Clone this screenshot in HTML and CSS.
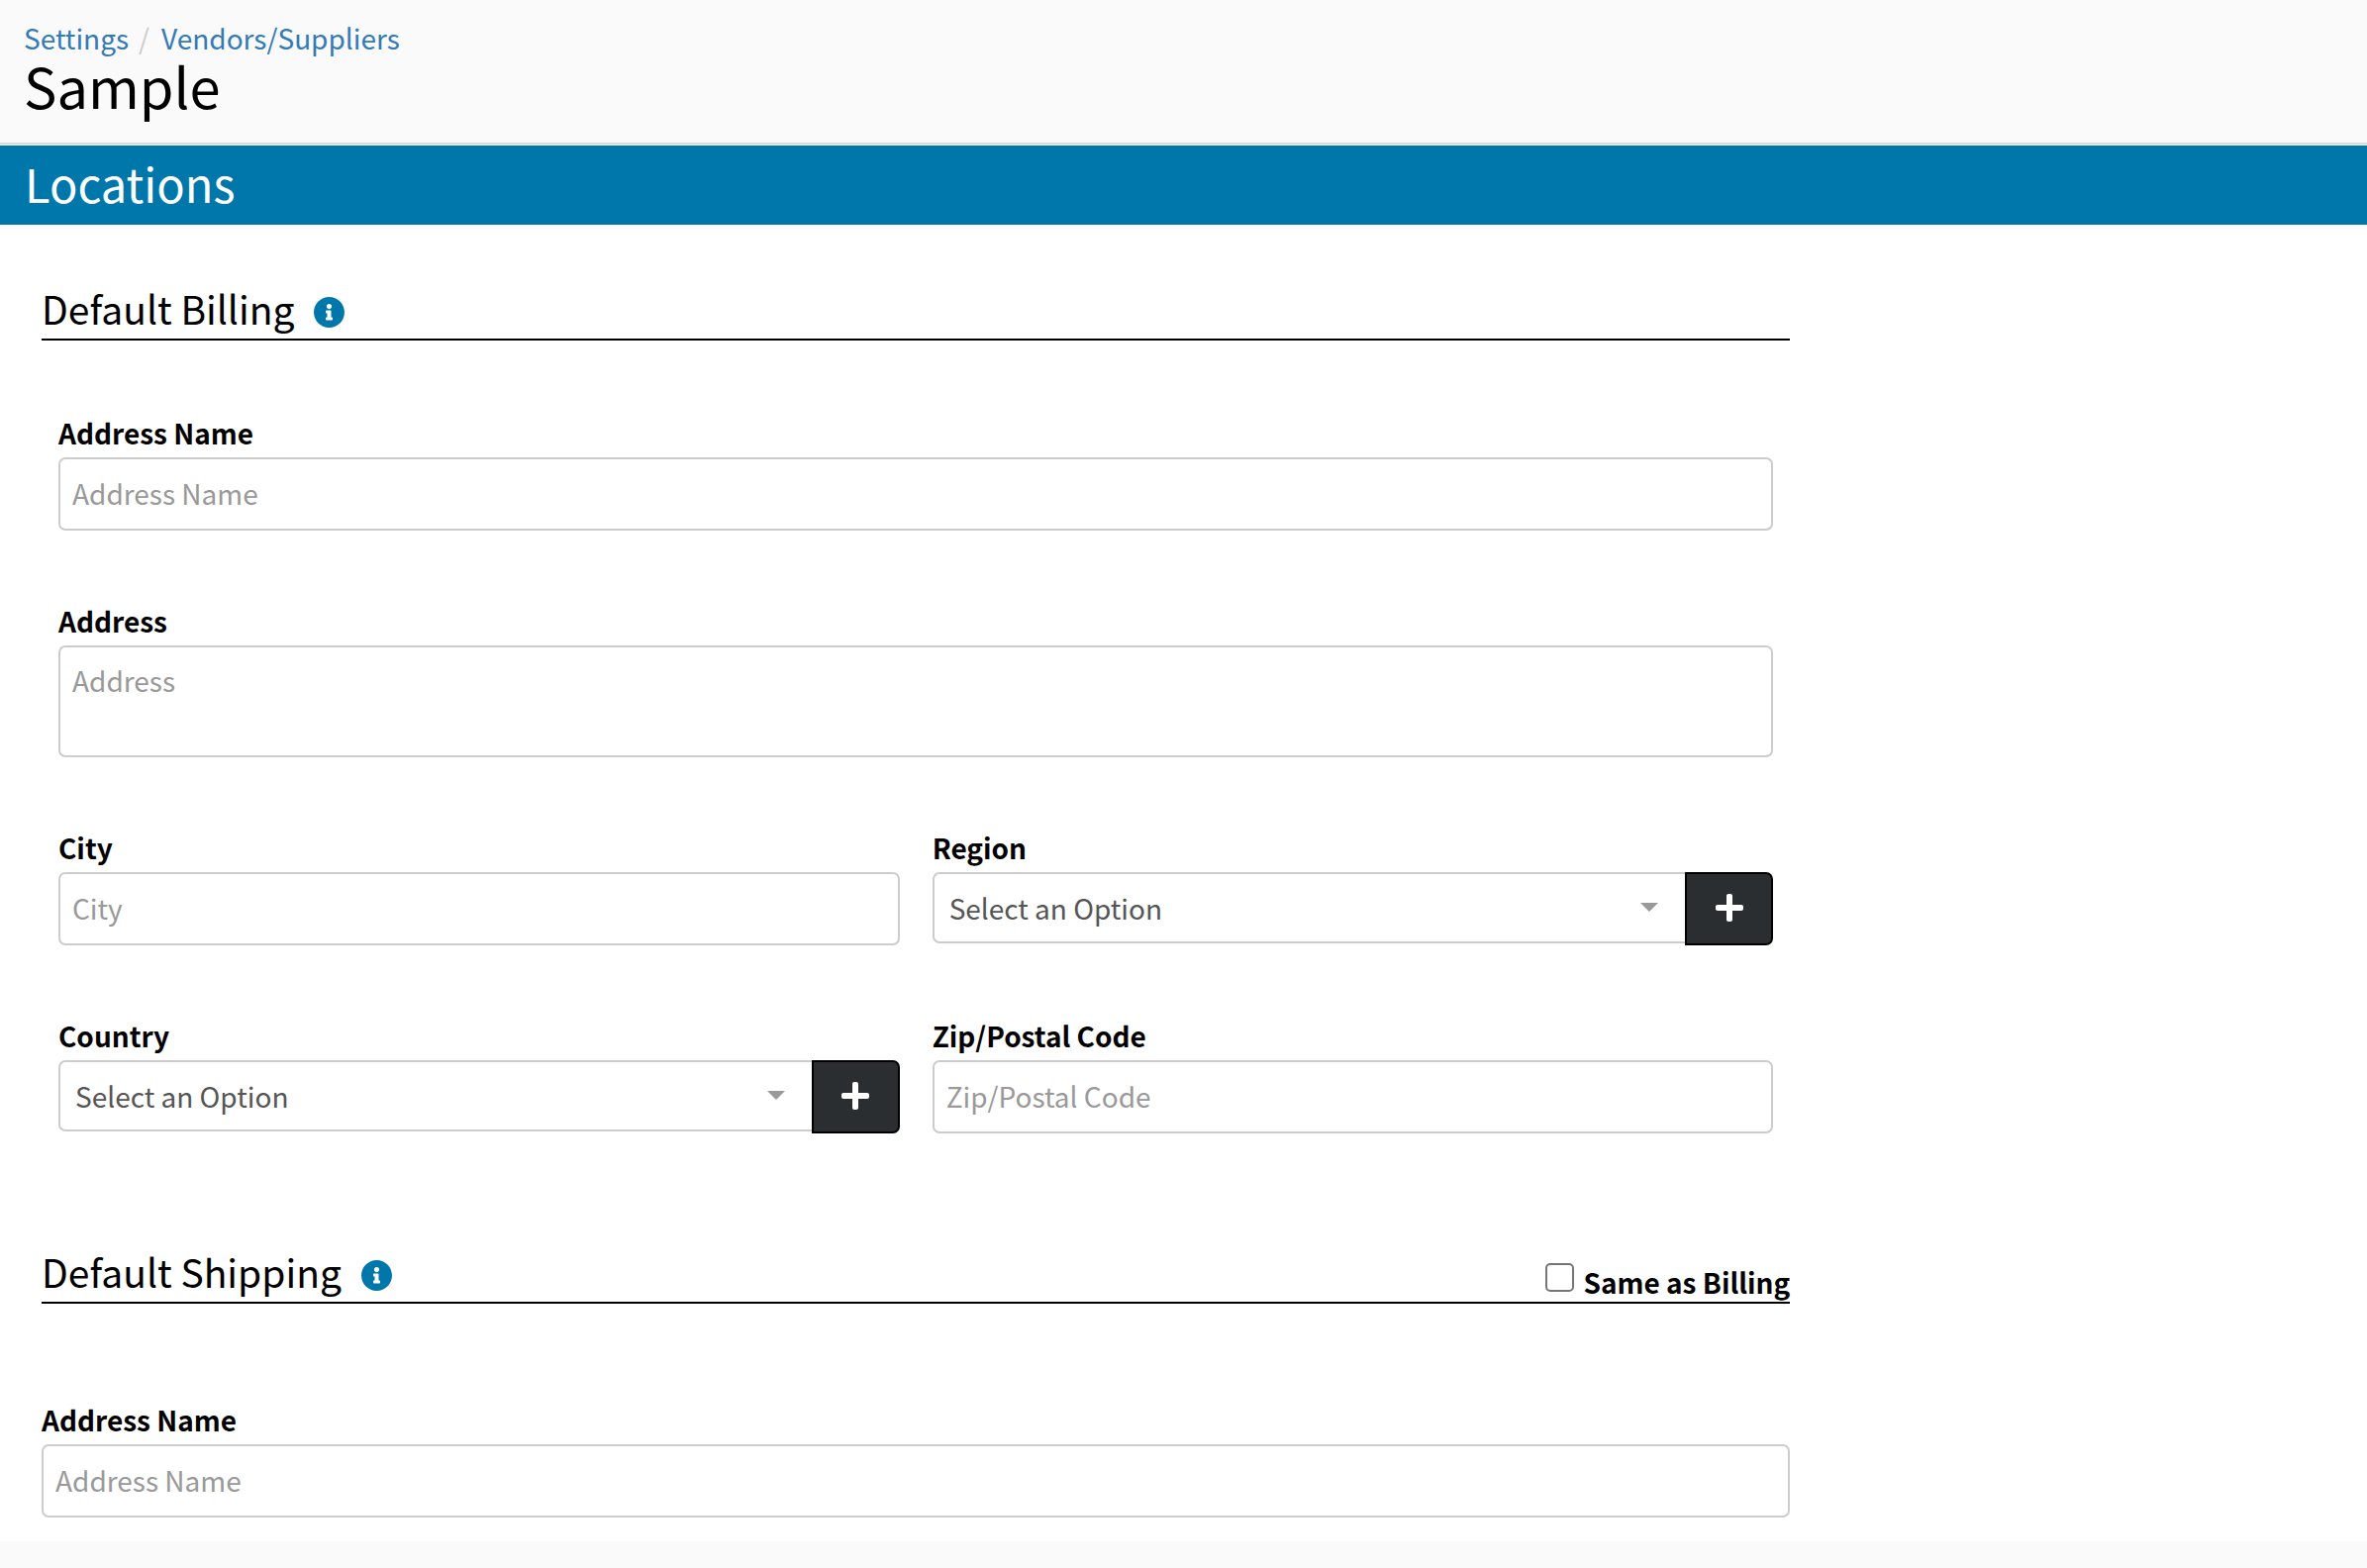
FILE: index.html
```html
<!DOCTYPE html>
<html lang="en">
<head>
<meta charset="utf-8">
<meta name="viewport" content="width=device-width, initial-scale=1">
<title>Sample - Vendors/Suppliers</title>
<link rel="stylesheet" href="styles.css">
</head>
<body>
<svg class="sprite" aria-hidden="true">
  <symbol id="icon-info" viewBox="8 8 496 496"><path d="M256 8C119.043 8 8 119.083 8 256c0 136.997 111.043 248 248 248s248-111.003 248-248C504 119.083 392.957 8 256 8zm0 110c23.196 0 42 18.804 42 42s-18.804 42-42 42-42-18.804-42-42 18.804-42 42-42zm56 254c0 6.627-5.373 12-12 12h-88c-6.627 0-12-5.373-12-12v-24c0-6.627 5.373-12 12-12h12v-64h-12c-6.627 0-12-5.373-12-12v-24c0-6.627 5.373-12 12-12h64c6.627 0 12 5.373 12 12v100h12c6.627 0 12 5.373 12 12v24z"/></symbol>
  <symbol id="icon-plus" viewBox="0 0 448 512"><path d="M416 208H272V64c0-17.670-14.330-32-32-32h-32c-17.670 0-32 14.330-32 32v144H32c-17.670 0-32 14.330-32 32v32c0 17.670 14.330 32 32 32h144v144c0 17.670 14.330 32 32 32h32c17.670 0 32-14.330 32-32V304h144c17.670 0 32-14.330 32-32v-32c0-17.670-14.330-32-32-32z"/></symbol>
  <symbol id="icon-caret" viewBox="0 0 18 9"><path d="M0 0h18L9 9z"/></symbol>
</svg>

<header class="page-header">
  <nav class="breadcrumb" aria-label="Breadcrumb">
    <a href="#settings">Settings</a>
    <span class="separator">/</span>
    <a href="#vendors">Vendors/Suppliers</a>
  </nav>
  <h1>Sample</h1>
</header>

<main>
  <h2 class="banner">Locations</h2>
  <form class="locations">
    <section>
      <div class="section-head">
        <h3>Default Billing</h3>
        <svg class="info" role="img" aria-label="Information"><use href="#icon-info"/></svg>
      </div>
      <div class="fields inset">
        <div class="field wide">
          <label for="bill-name">Address Name</label>
          <input class="control" id="bill-name" type="text" placeholder="Address Name">
        </div>
        <div class="field wide">
          <label for="bill-address">Address</label>
          <textarea class="control" id="bill-address" placeholder="Address"></textarea>
        </div>
        <div class="field">
          <label for="bill-city">City</label>
          <input class="control" id="bill-city" type="text" placeholder="City">
        </div>
        <div class="field">
          <label for="bill-region">Region</label>
          <div class="picker">
            <div class="select-wrap">
              <select id="bill-region"><option>Select an Option</option></select>
              <svg class="caret" aria-hidden="true"><use href="#icon-caret"/></svg>
            </div>
            <button class="add" type="button" aria-label="Add region"><svg><use href="#icon-plus"/></svg></button>
          </div>
        </div>
        <div class="field">
          <label for="bill-country">Country</label>
          <div class="picker">
            <div class="select-wrap">
              <select id="bill-country"><option>Select an Option</option></select>
              <svg class="caret" aria-hidden="true"><use href="#icon-caret"/></svg>
            </div>
            <button class="add" type="button" aria-label="Add country"><svg><use href="#icon-plus"/></svg></button>
          </div>
        </div>
        <div class="field">
          <label for="bill-zip">Zip/Postal Code</label>
          <input class="control" id="bill-zip" type="text" placeholder="Zip/Postal Code">
        </div>
      </div>
    </section>

    <section>
      <div class="section-head">
        <h3>Default Shipping</h3>
        <svg class="info" role="img" aria-label="Information"><use href="#icon-info"/></svg>
        <div class="same">
          <input id="same" type="checkbox">
          <label for="same">Same as Billing</label>
        </div>
      </div>
      <div class="fields">
        <div class="field wide">
          <label for="ship-name">Address Name</label>
          <input class="control" id="ship-name" type="text" placeholder="Address Name">
        </div>
      </div>
    </section>
  </form>
</main>
</body>
</html>
```
FILE: styles.css
```css
* {
  box-sizing: border-box;
}

body {
  margin: 0;
  background: #fafafa;
  color: #000;
  font-family: "Noto Sans CJK SC", "Noto Sans", sans-serif;
  font-size: 28px;
  line-height: 40px;
}

h1,
h2,
h3 {
  margin: 0;
  font-weight: 400;
}

.sprite {
  display: none;
}

.page-header {
  padding: 18px 24px 30px;
  margin-bottom: 1px;
  border-bottom: 2px solid #dadde1;
}

.breadcrumb {
  display: flex;
  gap: 10px;
}

.breadcrumb a {
  color: #337ab7;
  text-decoration: none;
}

.separator {
  padding-right: 2px;
  color: #ccc;
}

h1 {
  font-size: 56px;
  line-height: 56px;
}

main {
  background: #fff;
  padding-bottom: 24px;
}

.banner {
  padding: 0 25px 4px;
  background: #0077aa;
  color: #fff;
  font-size: 47px;
  line-height: 76px;
}

.locations {
  width: 75%;
  padding-right: 27px;
  margin-left: 42px;
}

.section-head {
  display: flex;
  align-items: center;
  gap: 20px;
  height: 58px;
  border-bottom: 2px solid #000;
}

section {
  padding-top: 59px;
}

section + section {
  padding-top: 114px;
}

h3 {
  padding-bottom: 6px;
  font-size: 39px;
  line-height: 50px;
}

.info {
  width: 31px;
  height: 31px;
  margin-top: 2px;
  fill: #0077aa;
}

.same {
  display: flex;
  align-self: flex-end;
  gap: 9px;
  margin-left: auto;
}

.same label,
.field label {
  font-weight: 700;
}

.field label {
  margin-bottom: 7px;
  line-height: 36px;
}

.same input {
  width: 29px;
  height: 29px;
  margin: 1px 0 0;
  border: 2px solid #767676;
  border-radius: 5px;
  background: #fff;
  appearance: none;
}

.same input:checked {
  background: #0077aa;
}

.fields {
  display: grid;
  grid-template-columns: 1fr 1fr;
  gap: 73px 33px;
  padding-top: 99px;
}

.inset {
  padding: 75px 17px 0;
}

.field {
  display: flex;
  flex-direction: column;
}

.wide {
  grid-column: 1 / -1;
}

.control,
select {
  width: 100%;
  height: 74px;
  margin: 0;
  padding: 0 12px 2px;
  border: 2px solid #ccc;
  border-radius: 7px;
  background: #fff;
  color: #555;
  font: inherit;
}

.control::placeholder {
  color: #999;
  opacity: 1;
}

textarea.control {
  height: 113px;
  padding: 13px 12px;
  resize: none;
}

.picker {
  display: flex;
}

.select-wrap {
  position: relative;
  flex: 1;
}

select {
  display: block;
  height: 72px;
  padding: 0 15px;
  border-right: 0;
  border-radius: 7px 0 0 7px;
  appearance: none;
}

.caret {
  position: absolute;
  top: 31px;
  right: 27px;
  width: 18px;
  height: 9px;
  fill: #999;
  pointer-events: none;
}

.add {
  display: flex;
  align-items: center;
  justify-content: center;
  width: 89px;
  height: 74px;
  padding: 0 0 2px;
  border: 2px solid #000;
  border-radius: 0 7px 7px 0;
  background: #2a2e31;
}

.add svg {
  width: 28px;
  height: 32px;
  fill: #fff;
}
```
